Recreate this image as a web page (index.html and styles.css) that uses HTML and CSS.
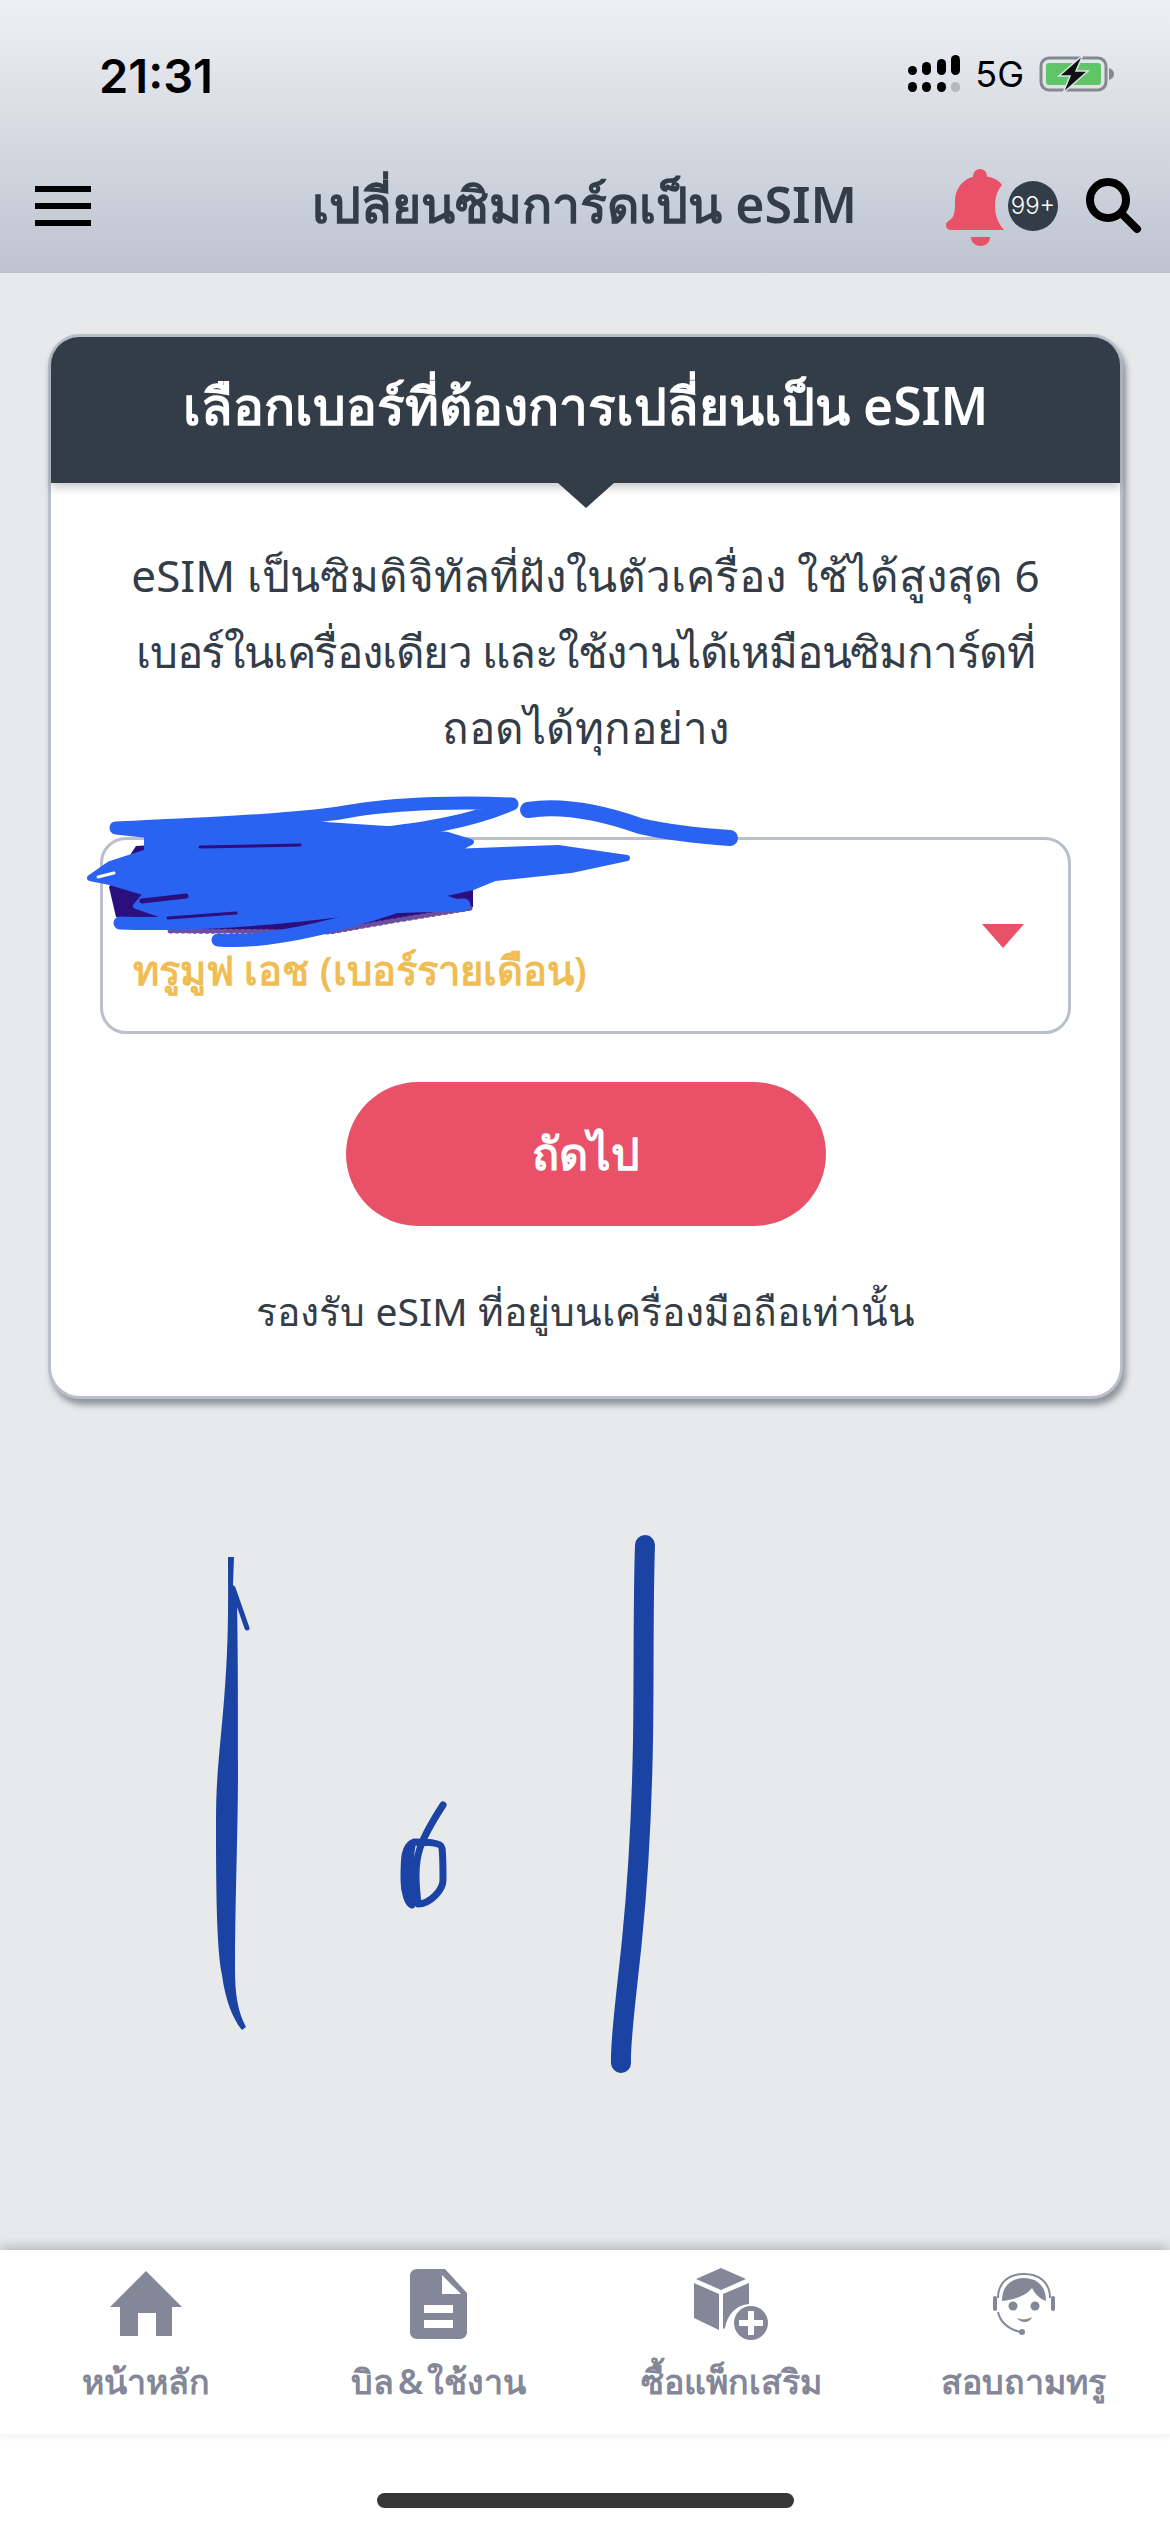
FILE: index.html
```html
<!DOCTYPE html>
<html lang="th">
<head>
    <meta charset="UTF-8">
    <meta name="viewport" content="width=device-width, initial-scale=1.0">
    <title>เปลี่ยนซิมการ์ดเป็น eSIM</title>
    <link rel="stylesheet" href="styles.css">
</head>
<body>
    <div class="page">
        <header class="top">
            <div class="status">
                <span class="time">21:31</span>
                <div class="status-right">
                    <svg class="signal" width="52" height="38" viewBox="0 0 52 38">
                        <rect x="0" y="11" width="9" height="9" rx="4.5"/>
                        <rect x="14" y="7" width="9" height="13" rx="4.5"/>
                        <rect x="29" y="4" width="9" height="16" rx="4.5"/>
                        <rect x="43" y="0" width="9" height="20" rx="4.5"/>
                        <rect x="0" y="27" width="9" height="10" rx="4.5"/>
                        <rect x="14" y="27" width="9" height="10" rx="4.5"/>
                        <rect x="29" y="27" width="9" height="10" rx="4.5"/>
                        <rect x="43" y="27" width="9" height="10" rx="4.5" fill="#b4b8bf"/>
                    </svg>
                    <span class="net">5G</span>
                    <svg class="battery" width="76" height="38" viewBox="0 0 76 38">
                        <rect x="2" y="3" width="65" height="32" rx="8" fill="none" stroke="#85888d" stroke-width="3"/>
                        <rect x="7" y="8" width="55" height="22" rx="3" fill="#5fc566"/>
                        <path d="M70 13c3 1 5 3 5 6s-2 5-5 6z" fill="#85888d"/>
                        <path d="M44 0L20 21h11l-7 17 25-22H37z" fill="#111" stroke="#dfe2e8" stroke-width="1.5"/>
                    </svg>
                </div>
            </div>
            <div class="navbar">
                <button class="menu" aria-label="menu"><i></i><i></i><i></i></button>
                <h1>เปลี่ยนซิมการ์ดเป็น eSIM</h1>
                <div class="actions">
                    <svg class="bell" width="60" height="80" viewBox="0 0 60 80">
                        <circle cx="34" cy="8" r="7"/>
                        <path d="M34 8C46 8 53 12 56 17C50 24 49 32 49 39C49 48 53 56 58 62L6 62C2 62 0 60 0 57C0 54 3 53 5 51C9 48 9 40 9 34C9 18 20 8 34 8Z"/>
                        <path d="M25 69H44C44 75 39 78 34.500 78C30 78 25 75 25 69Z"/>
                    </svg>
                    <span class="badge">99+</span>
                    <svg class="search" width="56" height="56" viewBox="0 0 56 56" fill="none" stroke="#000" stroke-width="8" stroke-linecap="round">
                        <circle cx="22" cy="22" r="18"/>
                        <path d="M36 36L51 51"/>
                    </svg>
                </div>
            </div>
        </header>

        <main class="content">
            <section class="card">
                <div class="card-head">เลือกเบอร์ที่ต้องการเปลี่ยนเป็น eSIM</div>
                <div class="card-body">
                    <p class="intro">eSIM เป็นซิมดิจิทัลที่ฝังในตัวเครื่อง ใช้ได้สูงสุด 6 <span class="tight">เบอร์ในเครื่องเดียว และใช้งานได้เหมือนซิมการ์ดที่</span>ถอดได้ทุกอย่าง</p>
                    <div class="picker">
                        <span class="plan">ทรูมูฟ เอช (เบอร์รายเดือน)</span>
                        <span class="caret"></span>
                    </div>
                    <button class="next">ถัดไป</button>
                    <p class="note">รองรับ eSIM ที่อยู่บนเครื่องมือถือเท่านั้น</p>
                </div>
            </section>
        </main>

        <nav class="tabs">
            <div class="tab">
                <svg width="72" height="72" viewBox="0 0 72 72">
                    <path d="M36 3L72 39H62V68H46V45H28V68H10V39H0Z"/>
                </svg>
                <span>หน้าหลัก</span>
            </div>
            <div class="tab">
                <svg width="58" height="72" viewBox="0 0 58 72">
                    <path fill-rule="evenodd" d="M7 1H35L57 25V64C57 68 54 71 50 71H7C3 71 0 68 0 64V8C0 4 3 1 7 1ZM32 7V26H51ZM14 37V45H43V37ZM14 52V60H43V52Z"/>
                </svg>
                <span>บิล &amp; ใช้งาน</span>
            </div>
            <div class="tab">
                <svg width="74" height="72" viewBox="0 0 74 72">
                    <path d="M27 0L52 11L27 22L2 11Z"/>
                    <path d="M0 15L25 26V62L0 50Z"/>
                    <path d="M29 26L55 15V36C42 37 33 47 31 60L29 61Z"/>
                    <circle cx="57" cy="55" r="17"/>
                    <path d="M54 43H60V52H69V58H60V67H54V58H45V52H54Z" fill="#fff"/>
                </svg>
                <span>ซื้อแพ็กเสริม</span>
            </div>
            <div class="tab">
                <svg width="66" height="72" viewBox="0 0 66 72">
                    <path d="M7 30C7 14 18 6 33 6S59 14 59 30" fill="none" stroke="#848797" stroke-width="2"/>
                    <path d="M11 33C11 18 20 10 33 10S55 18 55 33C49 31 44 26 41 20C35 28 22 32 11 33Z"/>
                    <circle cx="22" cy="38" r="4.500"/>
                    <circle cx="44" cy="38" r="4.500"/>
                    <path d="M26 50C31 52 36 52 41 49C39 55 30 56 26 50Z"/>
                    <path d="M7 44C9 54 18 62 30 64" fill="none" stroke="#848797" stroke-width="2"/>
                    <circle cx="31" cy="64" r="3"/>
                    <rect x="2" y="28" width="4" height="15" rx="2"/>
                    <rect x="60" y="28" width="4" height="15" rx="2"/>
                </svg>
                <span>สอบถามทรู</span>
            </div>
        </nav>
        <div class="home-area"><span class="home-bar"></span></div>

        <!-- pen marks the user drew on the screenshot -->
        <svg class="ink" width="1170" height="2532" viewBox="0 0 1170 2532" fill="none" stroke-linecap="round" stroke-linejoin="round">
            <path fill="#2b0f7e" d="M136 846L410 830L455 850L473 890L473 907L392 920L330 930L227 931L165 928L116 917L109 887Z"/>
            <path stroke="#6b4f9e" stroke-width="5" stroke-dasharray="2 4" d="M170 931L330 932L392 921L472 908"/>
            <path fill="#2a62f2" stroke="#2a62f2" stroke-width="6" d="M147 836L240 824L281 822L401 830L448 835L471 842L451 852L558 848L627 858L571 870L495 878L473 887L437 895L464 905L384 911L281 915L165 916L136 906L147 893L110 882L90 878L110 864L147 852Z"/>
            <g stroke="#2a62f2" stroke-width="13">
                <path d="M116 828C200 824 300 820 345 812C400 802 470 802 512 804C470 822 420 830 360 836C280 842 200 838 116 828Z"/>
                <path d="M528 810C560 805 600 812 640 826C670 833 700 836 730 838" stroke-width="16"/>
                <path d="M120 923C200 926 280 918 345 910C380 906 430 906 464 905"/>
                <path d="M218 940C270 944 340 925 392 908"/>
            </g>
            <g stroke="#2b0f7e" stroke-width="3">
                <path d="M200 847L300 845"/>
                <path d="M168 918L236 913"/>
                <path d="M142 901L186 896" stroke-width="5"/>
            </g>
            <path stroke="#fff" stroke-width="3" d="M98 877L114 873"/>

            <path fill="#1a43a3" d="M228 1557C228 1600 229 1640 224 1700C220 1750 216 1776 216 1820C216 1900 217 1950 222 1975C225 1998 232 2018 242 2030L246 2027C238 2012 235 1995 235 1970C235 1900 238 1830 238 1770C238 1700 238 1660 237 1600L233 1585L234 1557Z"/>
            <path stroke="#1a43a3" stroke-width="5" d="M233 1588L247 1628"/>
            <path stroke="#1a43a3" stroke-width="7" d="M443 1805C432 1822 424 1836 420 1848C414 1866 416 1885 418 1904C430 1904 443 1890 443 1880C443 1868 443 1856 442 1848C441 1842 425 1842 414 1842C404 1846 404 1858 404 1880C404 1892 408 1904 412 1905C410 1890 409 1860 412 1846"/>
            <path stroke="#1a43a3" stroke-width="20" d="M645 1545C643 1600 644 1680 643 1740C642 1800 638 1880 632 1940C627 1990 620 2040 621 2063"/>
        </svg>
    </div>
</body>
</html>
```

FILE: styles.css
```css
* {
    box-sizing: border-box;
}
html, body {
    margin: 0;
    padding: 0;
}
body {
    font-family: "Noto Sans", "Noto Sans CJK SC", sans-serif;
    background-color: #e8e9ea;
    color: #333d47;
}
.page {
    position: relative;
    width: 1170px;
    height: 2532px;
    display: flex;
    flex-direction: column;
    overflow: hidden;
}
.top {
    height: 273px;
    background: linear-gradient(#eef0f4, #bdc4cf);
}
.status {
    height: 146px;
    padding: 52px 55px 0 99px;
    display: flex;
    justify-content: space-between;
    align-items: flex-start;
}
.time {
    font-family: Inter, sans-serif;
    font-size: 47px;
    font-weight: 600;
    line-height: 47px;
    color: #000;
}
.status-right {
    display: flex;
    align-items: center;
    gap: 15px;
    padding-top: 3px;
}
.signal {
    fill: #000;
}
.net {
    font-family: Inter, sans-serif;
    font-size: 36px;
    line-height: 38px;
    color: #000;
}
.navbar {
    display: grid;
    grid-template-columns: 260px 1fr 260px;
    align-items: center;
    height: 127px;
    padding: 0 28px 8px 35px;
}
.menu {
    display: flex;
    flex-direction: column;
    gap: 11px;
    width: 56px;
    padding: 0;
    border: none;
    background: none;
}
.menu i {
    display: block;
    height: 6px;
    background-color: #000;
}
h1 {
    margin: 0;
    padding-right: 8px;
    font-size: 50px;
    font-weight: 600;
    text-align: center;
    white-space: nowrap;
}
.actions {
    display: flex;
    align-items: center;
    justify-content: flex-end;
    gap: 2px;
}
.bell {
    fill: #e85168;
    margin-top: 4px;
}
.badge {
    width: 50px;
    height: 50px;
    border-radius: 50%;
    background-color: #333d47;
    color: #fff;
    font-family: Inter, sans-serif;
    font-size: 24px;
    font-weight: 300;
    line-height: 50px;
    text-align: center;
}
.search {
    margin-left: 26px;
}
.content {
    flex: 1;
    padding: 61px 47px 0 48px;
}
.card {
    background-color: #fff;
    border: 3px solid #b9c0c9;
    border-radius: 32px;
    box-shadow: 3px 6px 6px rgba(120, 128, 138, 0.8);
    height: 1065px;
}
.card-head {
    position: relative;
    height: 146px;
    background-color: #333d47;
    border-radius: 28px 28px 0 0;
    color: #fff;
    font-size: 51.5px;
    font-weight: 600;
    line-height: 136px;
    text-align: center;
    box-shadow: 0 5px 8px rgba(0, 0, 0, 0.2);
}
.card-head::after {
    content: "";
    position: absolute;
    left: 50%;
    bottom: -25px;
    margin-left: -28px;
    border-left: 28px solid transparent;
    border-right: 28px solid transparent;
    border-top: 25px solid #333d47;
}
.card-body {
    display: flex;
    flex-direction: column;
    align-items: center;
    padding: 0 49px;
}
.intro {
    margin: 54px 0 0;
    font-size: 44px;
    line-height: 76px;
    text-align: center;
}
.tight {
    letter-spacing: -1.2px;
}
.picker {
    position: relative;
    width: 100%;
    height: 197px;
    margin-top: 72px;
    padding: 104px 30px 0;
    border: 3px solid #b9c0c9;
    border-radius: 26px;
    display: flex;
    justify-content: space-between;
}
.plan {
    font-size: 40px;
    font-weight: 600;
    line-height: 52px;
    color: #efbd54;
}
.caret {
    width: 0;
    height: 0;
    margin: -20px 14px 0 0;
    border-left: 21px solid transparent;
    border-right: 21px solid transparent;
    border-top: 24px solid #e85168;
}
.next {
    width: 480px;
    height: 144px;
    margin-top: 48px;
    border: none;
    border-radius: 72px;
    background-color: #e85168;
    color: #fff;
    font-family: inherit;
    font-size: 45px;
    font-weight: 600;
}
.note {
    margin: 59px 0 0;
    font-size: 39px;
    line-height: 52px;
    text-align: center;
}
.tabs {
    position: relative;
    display: grid;
    grid-template-columns: repeat(4, 1fr);
    height: 186px;
    padding-top: 18px;
    background-color: #fff;
    box-shadow: 0 -4px 10px rgba(0, 0, 0, 0.2);
    border-bottom: 2px solid #f6f6f6;
}
.tab {
    display: flex;
    flex-direction: column;
    align-items: center;
    fill: #848797;
    color: #848797;
    font-size: 34px;
    font-weight: 600;
    line-height: 46px;
    word-spacing: -5px;
}
.tab svg {
    margin-bottom: 18px;
}
.home-area {
    height: 96px;
    background-color: #fff;
    padding-top: 57px;
    display: flex;
    justify-content: center;
}
.home-bar {
    width: 417px;
    height: 15px;
    border-radius: 8px;
    background-color: #363636;
}
.ink {
    position: absolute;
    left: 0;
    top: 0;
}
```
